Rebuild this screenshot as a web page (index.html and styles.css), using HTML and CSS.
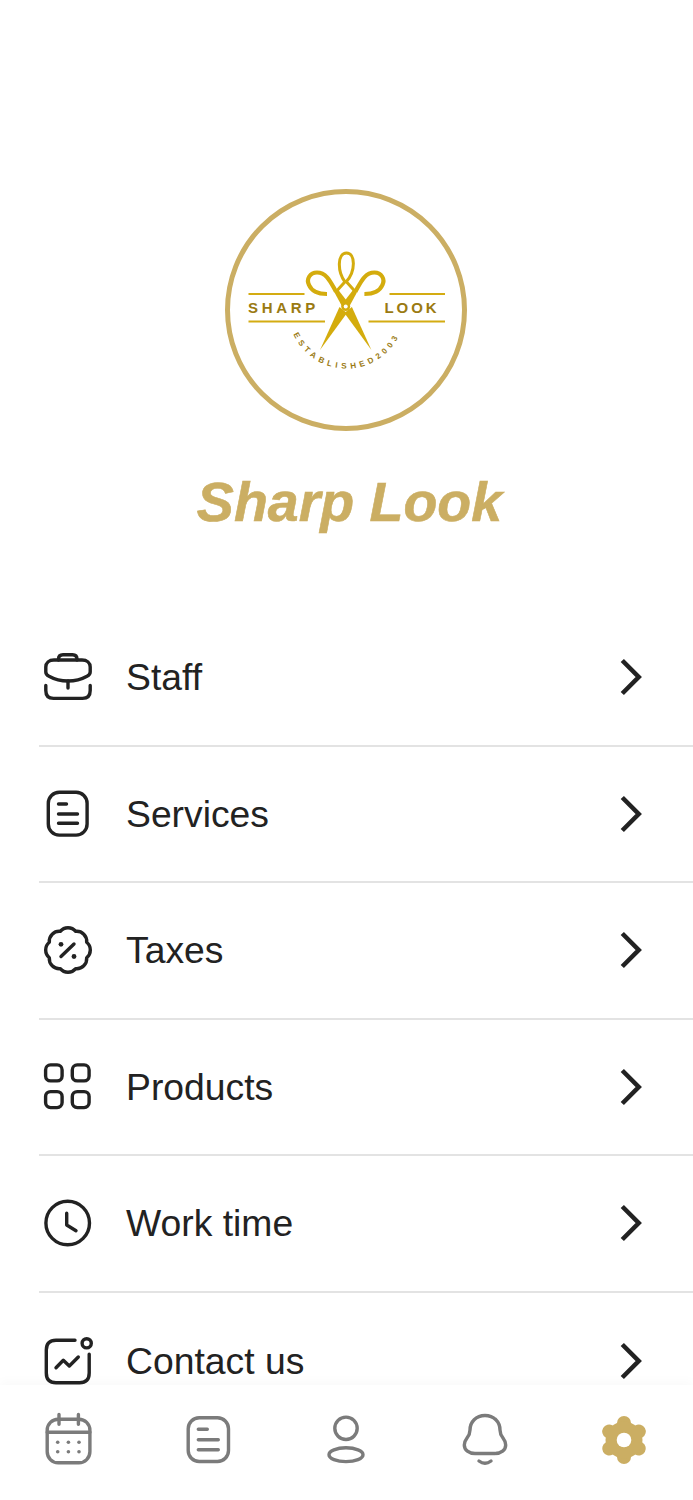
FILE: index.html
```html
<!DOCTYPE html>
<html lang="en">
<head>
    <meta charset="UTF-8">
    <meta name="viewport" content="width=device-width, initial-scale=1.0">
    <title>Sharp Look - Settings</title>
    <link rel="stylesheet" href="styles.css">
</head>
<body>
<div class="page">
    <header class="brand">
        <svg class="logo" viewBox="0 0 242 242" width="242" height="242">
            <circle class="logo-ring" cx="121" cy="121" r="118.5"/>
            <g class="logo-rule">
                <path d="M23.500 105H79.500M23.500 132.500H100M164.500 105H220M143.500 132.500H220"/>
            </g>
            <text class="logo-word" x="23" y="124">SHARP</text>
            <text class="logo-word logo-word-tight" x="159.500" y="124">LOOK</text>
            <!-- scissors -->
            <g class="logo-handles">
                <path d="M120 93C112 82 112.500 64 121.500 64C130.500 64 131 82 121 93"/>
                <path d="M120.700 92L111 102.700M120.700 92L130.400 102.700"/>
            </g>
            <g class="logo-handles logo-handles-heavy">
                <path d="M111 102.700C106 94 102 83.500 92 83.500C85 83.500 81 90 84 96C87 103 93 105 102 105"/>
                <path d="M130.400 102.700C135.400 94 139.400 83.500 149.400 83.500C156.400 83.500 160.400 90 157.400 96C154.400 103 148.400 105 139.400 105"/>
            </g>
            <path class="logo-blade" d="M109.500 103.500L113 100.500L125 116L119 121Z"/>
            <path class="logo-blade" d="M131.900 103.500L128.400 100.500L116.400 116L122.400 121Z"/>
            <path class="logo-blade" d="M114.500 118L122 124L95 161Z"/>
            <path class="logo-blade" d="M126.900 118L119.400 124L146.400 161Z"/>
            <circle class="logo-blade" cx="120.700" cy="117.500" r="4.500"/>
            <circle class="logo-pin" cx="120.700" cy="117.500" r="2"/>
            <path id="sealArc" class="logo-arc" d="M66 138.500A58 58 0 0 0 177 138.500"/>
            <text class="logo-seal"><textPath href="#sealArc" startOffset="50%" text-anchor="middle">ESTABLISHED2003</textPath></text>
        </svg>
        <h1 class="brand-name">Sharp Look</h1>
    </header>

    <ul class="menu">
        <li class="menu-row">
            <svg class="menu-icon" viewBox="0 0 48 48">
                <path d="M14.500 7V6C14.500 3 16.500 1.700 19 1.700H28.500C31 1.700 33 3 33 6V7"/>
                <path d="M10 7H38C43 7 46.200 9.800 46.200 14V19C46.200 21 45 22.300 43 23.200C38 26 31 28 24 28C17 28 10 26 5 23.200C3 22.300 1.800 21 1.800 19V14C1.800 9.800 5 7 10 7Z"/>
                <path d="M1.800 32.500V37.500C1.800 42.500 4.500 45.400 9.500 45.400H38.500C43.500 45.400 46.200 42.500 46.200 37.500V32.500"/>
                <path d="M24 28V35"/>
            </svg>
            <span class="menu-label">Staff</span>
            <svg class="menu-arrow" viewBox="0 0 30 40"><path d="M6.300 3.500L22.700 20L6.300 36.500"/></svg>
        </li>
        <li class="menu-row">
            <svg class="menu-icon" viewBox="0 0 48 48">
                <rect x="4.300" y="2.300" width="38.800" height="42.800" rx="11"/>
                <path d="M14.500 14H22.500M14.500 24H33.500M14.500 33.300H33.500"/>
            </svg>
            <span class="menu-label">Services</span>
            <svg class="menu-arrow" viewBox="0 0 30 40"><path d="M6.300 3.500L22.700 20L6.300 36.500"/></svg>
        </li>
        <li class="menu-row">
            <svg class="menu-icon" viewBox="0 0 48 48">
                <path d="M31.730 5.340A10 10 0 0 1 42.660 16.270A10 10 0 0 1 42.660 31.730A10 10 0 0 1 31.730 42.660A10 10 0 0 1 16.270 42.660A10 10 0 0 1 5.340 31.730A10 10 0 0 1 5.340 16.270A10 10 0 0 1 16.270 5.340A10 10 0 0 1 31.730 5.340Z"/>
                <path d="M17 30.500L30 18"/>
                <circle class="dot" cx="17" cy="18.300" r="2.400"/>
                <circle class="dot" cx="30" cy="30.500" r="2.400"/>
            </svg>
            <span class="menu-label">Taxes</span>
            <svg class="menu-arrow" viewBox="0 0 30 40"><path d="M6.300 3.500L22.700 20L6.300 36.500"/></svg>
        </li>
        <li class="menu-row">
            <svg class="menu-icon" viewBox="0 0 48 48">
                <rect x="1.600" y="1.900" width="16.500" height="16" rx="5"/>
                <rect x="28.300" y="1.900" width="16.800" height="16" rx="5"/>
                <rect x="1.600" y="28.600" width="16.500" height="16" rx="5"/>
                <rect x="28.300" y="28.600" width="16.800" height="16" rx="5"/>
            </svg>
            <span class="menu-label">Products</span>
            <svg class="menu-arrow" viewBox="0 0 30 40"><path d="M6.300 3.500L22.700 20L6.300 36.500"/></svg>
        </li>
        <li class="menu-row">
            <svg class="menu-icon" viewBox="0 0 48 48">
                <circle cx="23.700" cy="24" r="21.800"/>
                <path d="M22.700 14.300V26L32 31.700"/>
            </svg>
            <span class="menu-label">Work time</span>
            <svg class="menu-arrow" viewBox="0 0 30 40"><path d="M6.300 3.500L22.700 20L6.300 36.500"/></svg>
        </li>
        <li class="menu-row">
            <svg class="menu-icon" viewBox="0 0 48 48">
                <path d="M31 3.300H12C5.500 3.300 2.300 6.500 2.300 13V36C2.300 42.500 5.500 45.700 12 45.700H35.500C42 45.700 45.200 42.500 45.200 36V17.300"/>
                <circle cx="42.700" cy="6.300" r="4.600"/>
                <path d="M12 30.700L19.300 23.300L25.300 29L34.300 20"/>
            </svg>
            <span class="menu-label">Contact us</span>
            <svg class="menu-arrow" viewBox="0 0 30 40"><path d="M6.300 3.500L22.700 20L6.300 36.500"/></svg>
        </li>
    </ul>
</div>

<nav class="tabbar">
    <div class="tab">
        <svg class="tab-icon" viewBox="0 0 52 52">
            <rect x="4.200" y="5.200" width="42.700" height="43.600" rx="11"/>
            <path d="M16 0.500V10.300M35.400 0.500V10.300M4.200 18.300H46.900"/>
            <g class="dots">
                <circle cx="14.700" cy="28.300" r="1.800"/><circle cx="25.400" cy="28.300" r="1.800"/><circle cx="36" cy="28.300" r="1.800"/>
                <circle cx="14.700" cy="37.700" r="1.800"/><circle cx="25.400" cy="37.700" r="1.800"/><circle cx="36" cy="37.700" r="1.800"/>
            </g>
        </svg>
    </div>
    <div class="tab">
        <svg class="tab-icon" viewBox="0 0 52 52">
            <rect x="6.200" y="3.800" width="40.300" height="43.700" rx="11"/>
            <path d="M16.300 15.300H25.300M16.300 25.700H36.300M16.300 35.700H36.300"/>
        </svg>
    </div>
    <div class="tab">
        <svg class="tab-icon" viewBox="0 0 52 52">
            <circle cx="26" cy="14.300" r="11.200"/>
            <ellipse cx="26" cy="40.700" rx="17" ry="6.900"/>
        </svg>
    </div>
    <div class="tab">
        <svg class="tab-icon" viewBox="0 0 52 52">
            <path d="M26 1.500C17 1.500 11 8 11 16C11 24 5.300 24 5.300 31C5.300 36 10 39.500 16 39.500H36C42 39.500 46.700 36 46.700 31C46.700 24 41 24 41 16C41 8 35 1.500 26 1.500Z"/>
            <path d="M20 47Q26 51.500 32 47"/>
        </svg>
    </div>
    <div class="tab">
        <svg class="tab-icon tab-icon-active" viewBox="0 0 52 52">
            <g class="gear-teeth">
                <path d="M26 8.900V12"/>
                <path d="M26 8.900V12" transform="rotate(60 26 26)"/>
                <path d="M26 8.900V12" transform="rotate(120 26 26)"/>
                <path d="M26 8.900V12" transform="rotate(180 26 26)"/>
                <path d="M26 8.900V12" transform="rotate(240 26 26)"/>
                <path d="M26 8.900V12" transform="rotate(300 26 26)"/>
            </g>
            <circle class="gear-body" cx="26" cy="26" r="18.500"/>
            <circle class="gear-hole" cx="26" cy="26" r="7.300"/>
        </svg>
    </div>
</nav>
</body>
</html>
```

FILE: styles.css
```css
* {
  box-sizing: border-box;
}

html,
body {
  margin: 0;
  height: 1500px;
  overflow: hidden;
  background-color: #fff;
}

body {
  font-family: "Liberation Sans", Arial, sans-serif;
  color: #222;
}

.page {
  height: 1500px;
  padding-top: 189px;
}

.brand {
  display: flex;
  flex-direction: column;
  align-items: center;
}

.logo {
  display: block;
  margin-left: -1px;
}

.logo-ring {
  fill: #fff;
  stroke: #cbae63;
  stroke-width: 5;
}

.logo-rule path {
  fill: none;
  stroke: #d4ac12;
  stroke-width: 2;
}

.logo-word {
  font-size: 15px;
  font-weight: 700;
  letter-spacing: 3.7px;
  fill: #9a7a12;
}

.logo-word-tight {
  letter-spacing: 2.9px;
}

.logo-handles path {
  fill: none;
  stroke: #d4ac0d;
  stroke-width: 3;
  stroke-linejoin: round;
}

.logo-handles-heavy path {
  stroke-width: 4.2;
}

.logo-blade {
  fill: #d4ac0d;
}

.logo-pin {
  fill: #fff;
}

.logo-arc {
  fill: none;
}

.logo-seal {
  font-size: 8px;
  font-weight: 700;
  letter-spacing: 4px;
  fill: #9a7a12;
}

.brand-name {
  margin: 39px 0 0;
  font-size: 55.5px;
  line-height: 64px;
  font-style: italic;
  font-weight: 700;
  color: #cbae63;
  -webkit-text-stroke: 0.6px #cbae63;
  position: relative;
  left: 3px;
}

.menu {
  list-style: none;
  margin: 76px 0 0 39px;
  padding: 0;
}

.menu-row {
  display: flex;
  align-items: center;
  height: 136.5px;
  padding: 0 47px 0 5px;
  border-bottom: 2px solid #e3e3e3;
}

.menu-row:last-child {
  border-bottom: none;
}

.menu-icon {
  flex: none;
  width: 48px;
  height: 48px;
  fill: none;
  stroke: #222;
  stroke-width: 3.4;
  stroke-linecap: round;
  stroke-linejoin: round;
  overflow: visible;
}

.menu-icon .dot {
  fill: #222;
  stroke: none;
}

.menu-label {
  margin-left: 34px;
  font-size: 37.3px;
  line-height: 44px;
}

.menu-arrow {
  flex: none;
  margin-left: auto;
  width: 30px;
  height: 40px;
  fill: none;
  stroke: #222;
  stroke-width: 4.6;
}

.tabbar {
  position: fixed;
  left: 0;
  right: 0;
  bottom: 0;
  height: 115px;
  padding-top: 29px;
  display: flex;
  align-items: flex-start;
  background-color: #fff;
  box-shadow: 0 -4px 10px rgba(0, 0, 0, 0.025);
}

.tab {
  flex: 1;
  display: flex;
  justify-content: center;
}

.tab-icon {
  width: 52px;
  height: 52px;
  fill: none;
  stroke: #7b7b7b;
  stroke-width: 3.4;
  stroke-linecap: round;
  stroke-linejoin: round;
  overflow: visible;
}

.tab-icon .dots circle {
  fill: #7b7b7b;
  stroke: none;
}

.gear-teeth path {
  stroke: #cbae63;
  stroke-width: 14;
}

.tab-icon .gear-body {
  fill: #cbae63;
  stroke: none;
}

.tab-icon .gear-hole {
  fill: #fff;
  stroke: none;
}
```
